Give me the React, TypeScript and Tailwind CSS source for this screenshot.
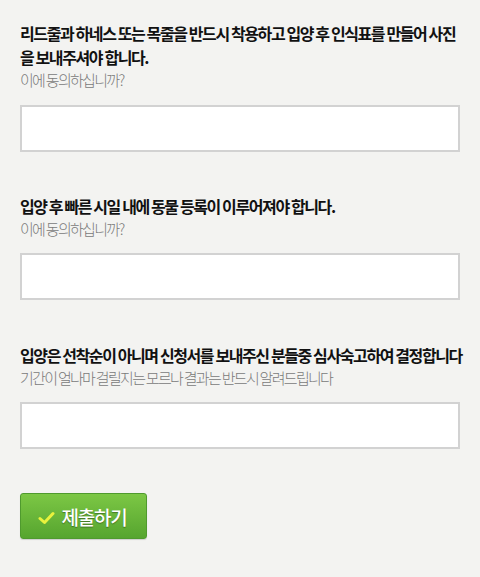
import React from "react";

const font = { fontFamily: '"Noto Sans CJK KR", "Noto Sans", sans-serif' };

function Section({ title, sub, className }: { title: React.ReactNode; sub: string; className?: string }) {
  return (
    <div className={className}>
      <div className="whitespace-nowrap text-[16px] font-bold leading-[24px] tracking-[-1.4px] text-[#111]">{title}</div>
      <div className="whitespace-nowrap text-[15px] font-light leading-[22px] tracking-[-1.7px] text-[#7a7a7a]">{sub}</div>
    </div>
  );
}

export default function App() {
  return (
    <div style={font} className="min-h-[577px] w-[480px] bg-[#f3f3f1] px-5 pt-[21px]">
      <Section
        title={<>리드줄과 하네스 또는 목줄을 반드시 착용하고 입양 후 인식표를 만들어 사진<br />을 보내주셔야 합니다.</>}
        sub="이에 동의하십니까?"
      />
      <div className="mt-[14px] h-[47px] w-[440px] border-2 border-[#d2d2d2] bg-white" />

      <Section className="mt-[42px]" title="입양 후 빠른 시일 내에 동물 등록이 이루어져야 합니다." sub="이에 동의하십니까?" />
      <div className="mt-[13px] h-[47px] w-[440px] border-2 border-[#d2d2d2] bg-white" />

      <Section
        className="mt-[43px]"
        title="입양은 선착순이 아니며 신청서를 보내주신 분들중 심사숙고하여 결정합니다"
        sub="기간이 얼나마 걸릴지는 모르나 결과는 반드시 알려드립니다"
      />
      <div className="mt-[13px] h-[47px] w-[440px] border-2 border-[#d2d2d2] bg-white" />

      <button className="mt-[44px] flex h-[46px] w-[127px] items-center justify-center gap-[6px] rounded-[3px] border border-[#4f9a2e] bg-gradient-to-b from-[#7cc745] to-[#56a52f] pr-[2px] shadow-[0_1px_1px_rgba(0,0,0,0.15)]">
        <svg width="17" height="14" viewBox="0 0 17 14" className="mt-[3px]">
          <path d="M2 7.5 L6.5 11.5 L15 2.5" fill="none" stroke="#e9f23d" strokeWidth="3" strokeLinecap="round" strokeLinejoin="round" />
        </svg>
        <span className="text-[19px] font-medium leading-none tracking-[-1.2px] text-white [text-shadow:0_1px_1px_rgba(0,0,0,0.35)]">제출하기</span>
      </button>
    </div>
  );
}
